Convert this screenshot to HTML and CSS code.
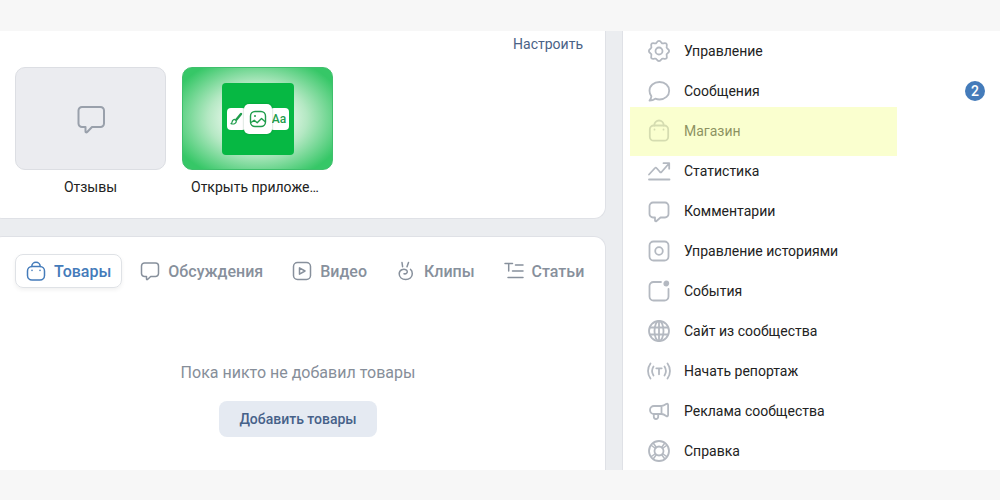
FILE: index.html
```html
<!DOCTYPE html>
<html lang="ru">

<head>
  <meta charset="UTF-8">
  <meta name="viewport" content="width=device-width, initial-scale=1.0">
  <title>Сообщество</title>
  <link rel="stylesheet" href="styles.css">
</head>

<body>
  <div class="page">
    <main class="content">
      <section class="card apps">
        <div class="apps-head">
          <a href="#" class="setup">Настроить</a>
        </div>
        <div class="apps-list">
          <a href="#" class="app">
            <span class="cover">
              <svg width="32" height="32" viewBox="0 0 32 32" fill="none" stroke="#99a0ab" stroke-width="2" stroke-linejoin="round">
                <path d="M7 4h18.500a3.500 3.500 0 0 1 3.500 3.500v13a3.500 3.500 0 0 1-3.500 3.500h-8.500l-4.800 5c-.8.800-1.700.4-1.700-.6v-4.400h-3.500a3.500 3.500 0 0 1-3.500-3.500v-13a3.500 3.500 0 0 1 3.500-3.500z" />
              </svg>
            </span>
            <span class="app-name">Отзывы</span>
          </a>
          <a href="#" class="app">
            <span class="cover green">
              <span class="logo">
                <span class="chip">
                  <svg width="14" height="14" viewBox="0 0 14 14" fill="none" stroke="#1f9d4c" stroke-linecap="round" stroke-linejoin="round">
                    <path d="M12 2L7.500 7.500" stroke-width="2.400" />
                    <path d="M6 7.300c-2 .1-2.700 1.200-2.900 2.700-.1.900-.5 1.300-1.100 1.600 2.400.9 5.300.2 5.400-2.600z" stroke-width="1.200" />
                  </svg>
                </span>
                <span class="chip big">
                  <svg width="18" height="18" viewBox="0 0 18 18" fill="none" stroke="#1f9d4c" stroke-width="1.400" stroke-linejoin="round">
                    <rect x="1.500" y="1.500" width="15" height="15" rx="4.500" />
                    <path d="M2 12.500l3.200-2.300 3 2.500 4.300-4.200 4 3.500" />
                    <circle cx="6" cy="6" r="1" fill="#1f9d4c" stroke="none" />
                  </svg>
                </span>
                <span class="chip">Aa</span>
              </span>
            </span>
            <span class="app-name">Открыть приложение</span>
          </a>
        </div>
      </section>

      <section class="card goods">
        <nav class="tabs">
          <button type="button" class="tab active">
            <svg class="icon" viewBox="0 0 20 20">
              <rect x="1.500" y="5.500" width="17" height="13.500" rx="4.500" />
              <path d="M5.800 5.500a4.200 4.200 0 0 1 8.400 0" />
              <path d="M6 9.300v.2M14 9.300v.2" />
            </svg>
            Товары
          </button>
          <button type="button" class="tab">
            <svg class="icon" viewBox="0 0 20 20">
              <path d="M4.500 2h11a3 3 0 0 1 3 3v7.500a3 3 0 0 1-3 3h-4.800l-3.200 3c-.5.4-1 .2-1-.4v-2.600h-2a3 3 0 0 1-3-3v-7.500a3 3 0 0 1 3-3z" />
            </svg>
            Обсуждения
          </button>
          <button type="button" class="tab">
            <svg class="icon" viewBox="0 0 20 20">
              <rect x="1.500" y="1.500" width="17" height="17" rx="4" />
              <path d="M7.500 6.800v6.400l5.500-3.200z" />
            </svg>
            Видео
          </button>
          <button type="button" class="tab">
            <svg class="icon" viewBox="0 0 20 20">
              <path d="M6 1.500l.6 4.200M12.500 1.500l-1.500 4.200" />
              <path d="M8 12.800c2.300.4 3.600-1 3.200-2.700-.4-1.700-3.400-2.200-5.400-1.300-1.700.8-2.600 2.400-2.600 4 0 3.500 2.900 5.800 6.500 5.800s6.600-2.300 6.600-5.800c0-2.200-.6-3.700-1.800-4.500" />
            </svg>
            Клипы
          </button>
          <button type="button" class="tab">
            <svg class="icon" viewBox="0 0 20 20">
              <path d="M1 2.500h7.500M4.700 2.500v7.500M11.500 4h7.500M8.500 10h10.500M4 16.500h15" />
            </svg>
            Статьи
          </button>
        </nav>
        <div class="empty">
          <p>Пока никто не добавил товары</p>
          <button type="button" class="add">Добавить товары</button>
        </div>
      </section>
    </main>

    <aside class="side">
      <ul class="menu">
        <li>
          <a href="#">
            <svg class="icon" viewBox="0 0 24 24">
              <path d="M9.500 3.700Q12 0 14.500 3.700Q15.200 4.800 16.600 4.300Q20.600 3.400 19.700 7.400Q19.200 8.800 20.300 9.500Q24 12 20.300 14.500Q19.200 15.200 19.700 16.600Q20.600 20.600 16.600 19.700Q15.200 19.200 14.500 20.300Q12 24 9.500 20.300Q8.800 19.200 7.400 19.700Q3.400 20.600 4.300 16.600Q4.800 15.200 3.700 14.500Q0 12 3.700 9.500Q4.800 8.800 4.300 7.400Q3.400 3.400 7.400 4.300Q8.800 4.800 9.500 3.700z" />
              <circle cx="12" cy="12" r="3.500" />
            </svg>
            Управление
          </a>
        </li>
        <li>
          <a href="#">
            <svg class="icon" viewBox="0 0 24 24">
              <path d="M12.500 3c5.600 0 9.700 3.800 9.700 8.700s-4.100 8.800-9.700 8.800c-1.500 0-2.900-.3-4.200-.8-1.600 1.200-3.600 1.800-5.800 1.800 1.200-1.400 1.800-2.700 1.900-4.100-1.200-1.600-1.900-3.500-1.900-5.700 0-4.900 4.300-8.700 10-8.700z" />
            </svg>
            Сообщения
            <span class="count">2</span>
          </a>
        </li>
        <li class="marked">
          <a href="#">
            <svg class="icon" viewBox="0 0 24 24">
              <rect x="2.800" y="6.500" width="18.400" height="15.200" rx="4" />
              <path d="M7.300 6.500v-.3a4.700 4.700 0 0 1 9.400 0v.3" />
              <path d="M7.500 10.400v.3M16.500 10.400v.3" />
            </svg>
            Магазин
          </a>
        </li>
        <li>
          <a href="#">
            <svg class="icon" viewBox="0 0 24 24">
              <path d="M2 15.500l6-6.500c.5-.6 1-.6 1.500 0l3.500 4c.5.500 1 .5 1.500 0l7.500-8.500M16.500 4.200h5.700v5.500M2 20.500h20.500" />
            </svg>
            Статистика
          </a>
        </li>
        <li>
          <a href="#">
            <svg class="icon" viewBox="0 0 24 24">
              <path d="M6 3.500h12a3.500 3.500 0 0 1 3.500 3.500v8a3.500 3.500 0 0 1-3.500 3.500h-4.500l-4 3.500c-.7.600-1.500.3-1.500-.6v-2.900h-2a3.500 3.500 0 0 1-3.500-3.500v-8a3.500 3.500 0 0 1 3.500-3.500z" />
            </svg>
            Комментарии
          </a>
        </li>
        <li>
          <a href="#">
            <svg class="icon" viewBox="0 0 24 24">
              <rect x="2.500" y="2.500" width="19" height="19" rx="4" />
              <circle cx="12" cy="12" r="3.800" />
            </svg>
            Управление историями
          </a>
        </li>
        <li>
          <a href="#">
            <svg class="icon" viewBox="0 0 24 24">
              <path d="M14 3h-7.500a4 4 0 0 0-4 4v10.500a4 4 0 0 0 4 4h11a4 4 0 0 0 4-4v-7.500" />
              <circle cx="19.300" cy="4.500" r="2" fill="currentColor" />
            </svg>
            События
          </a>
        </li>
        <li>
          <a href="#">
            <svg class="icon" viewBox="0 0 24 24">
              <circle cx="12" cy="12" r="10" />
              <ellipse cx="12" cy="12" rx="4.500" ry="10" />
              <path d="M3 8.500h18M3 15.500h18M12 2v20" />
            </svg>
            Сайт из сообщества
          </a>
        </li>
        <li>
          <a href="#">
            <svg class="icon" viewBox="0 0 24 24">
              <path d="M3.500 4.500c-3.300 4.500-3.300 10.500 0 15M20.500 4.500c3.300 4.500 3.300 10.500 0 15M6.500 7.500c-1.800 2.800-1.800 6.200 0 9M17.500 7.500c1.800 2.800 1.800 6.200 0 9M9.300 9.300h5.400M12 9.300v6" />
            </svg>
            Начать репортаж
          </a>
        </li>
        <li>
          <a href="#">
            <svg class="icon" viewBox="0 0 24 24">
              <path d="M14.500 7h-7.500a4 4 0 0 0 0 8h7.500c1.700 0 3.200.8 4.700 1.900 1 .7 1.900.3 1.900-.9v-10c0-1.200-.9-1.600-1.900-.9-1.500 1.100-3 1.900-4.700 1.900zM14.500 7v8M6.800 15v2.800a2.200 2.200 0 0 0 4.400 0v-2.800" />
            </svg>
            Реклама сообщества
          </a>
        </li>
        <li>
          <a href="#">
            <svg class="icon" viewBox="0 0 24 24">
              <circle cx="12" cy="12" r="10" />
              <circle cx="12" cy="12" r="4.500" />
              <path d="M4.500 6.500l4 3M6.500 4.500l3 4M19.500 6.500l-4 3M17.500 4.500l-3 4M4.500 17.500l4-3M6.500 19.500l3-4M19.500 17.500l-4-3M17.500 19.500l-3-4" stroke-width="1.500" />
            </svg>
            Справка
          </a>
        </li>
      </ul>
    </aside>
  </div>
</body>

</html>
```
FILE: styles.css
```css
* {
  margin: 0;
  padding: 0;
  box-sizing: border-box;
}

body {
  padding: 31px 0 30px;
  background: #f7f7f7;
  font-family: Roboto, "Liberation Sans", sans-serif;
  font-size: 14px;
  color: #222;
}

a {
  color: inherit;
  text-decoration: none;
}

button {
  border: none;
  background: none;
  font-family: inherit;
  cursor: pointer;
}

.page {
  display: grid;
  grid-template-columns: minmax(0, 1fr) 378px;
  gap: 16px;
  height: calc(100vh - 61px);
  overflow: hidden;
  background: #ebedf0;
}

/* левая колонка */
.content {
  display: flex;
  flex-direction: column;
  gap: 17px;
  margin-left: -10px;
}

.card {
  padding-left: 24px;
  border: 1px solid #dfe1e6;
  border-radius: 12px;
  background: #fff;
}

.apps {
  padding-right: 22px;
  padding-bottom: 22px;
  border-top: none;
  border-radius: 0 0 12px 12px;
}

.apps-head {
  padding: 3px 0 13px;
  text-align: right;
}

.setup {
  display: block;
  line-height: 20px;
  color: #4a6286;
}

.apps-list {
  display: flex;
  gap: 16px;
}

.app {
  width: 151px;
  text-align: center;
}

.cover {
  display: flex;
  align-items: center;
  justify-content: center;
  height: 103px;
  border: 1px solid #dcdee3;
  border-radius: 10px;
  background: #ebecf0;
}

.green {
  border-color: #3fbf6c;
  background: radial-gradient(90px 64px at center, #e6f7ea 30%, #b4e8c3 55%, #36c767 100%);
}

.logo {
  display: flex;
  align-items: center;
  justify-content: center;
  width: 72px;
  height: 72px;
  border-radius: 4px;
  background: #06b843;
}

.chip {
  display: flex;
  align-items: center;
  justify-content: center;
  width: 19px;
  height: 22px;
  border-radius: 4px;
  background: #fff;
  font-size: 12px;
  font-weight: 500;
  color: #1f9d4c;
}

.big {
  width: 28px;
  height: 30px;
  margin: 0 -2px;
  border-radius: 5px;
  box-shadow: 0 0 2px rgba(0, 80, 30, .4);
  z-index: 1;
}

.app-name {
  display: block;
  padding: 0 9px;
  margin-top: 8px;
  line-height: 18px;
  overflow: hidden;
  white-space: nowrap;
  text-overflow: ellipsis;
}

.goods {
  flex: 1;
  padding-top: 17px;
  padding-right: 8px;
  border-bottom: none;
  border-radius: 12px 12px 0 0;
}

.tabs {
  display: flex;
  gap: 7px;
}

.tab {
  display: flex;
  align-items: center;
  gap: 8px;
  height: 34px;
  padding: 0 10px;
  border: 1px solid transparent;
  border-radius: 8px;
  font-size: 16px;
  font-weight: 500;
  color: #87909c;
}

.tab.active {
  border-color: #dfe2e6;
  box-shadow: 0 2px 4px rgba(0, 0, 0, .06);
  color: #447bba;
}

.icon {
  flex: none;
  width: 20px;
  height: 20px;
  fill: none;
  stroke: currentColor;
  stroke-width: 1.5;
  stroke-linecap: round;
  stroke-linejoin: round;
}

.empty {
  padding-top: 74px;
  padding-right: 16px;
  text-align: center;
}

.empty p {
  font-size: 16px;
  line-height: 22px;
  color: #868e99;
}

.add {
  height: 36px;
  margin-top: 17px;
  padding: 0 20px;
  border-radius: 8px;
  background: #e5eaf2;
  font-size: 14px;
  font-weight: 500;
  color: #466189;
}

/* меню справа */
.side {
  border-left: 1px solid #dfe1e6;
  background: #fff;
}

.menu {
  list-style: none;
}

.menu a {
  display: flex;
  align-items: center;
  gap: 13px;
  height: 40px;
  padding: 0 15px 0 24px;
}

.menu .icon {
  width: 24px;
  height: 24px;
  stroke-width: 1.8;
  color: #b4b9c1;
}

.count {
  width: 20px;
  margin-left: auto;
  border-radius: 10px;
  background: #447bba;
  font-size: 14px;
  font-weight: 500;
  line-height: 20px;
  text-align: center;
  color: #fff;
}

.marked {
  position: relative;
}

/* жёлтый маркер поверх пункта */
.marked::after {
  content: '';
  position: absolute;
  top: -4px;
  bottom: -5px;
  left: 7px;
  width: 267px;
  background: rgba(245, 255, 159, .5);
  pointer-events: none;
}
```
